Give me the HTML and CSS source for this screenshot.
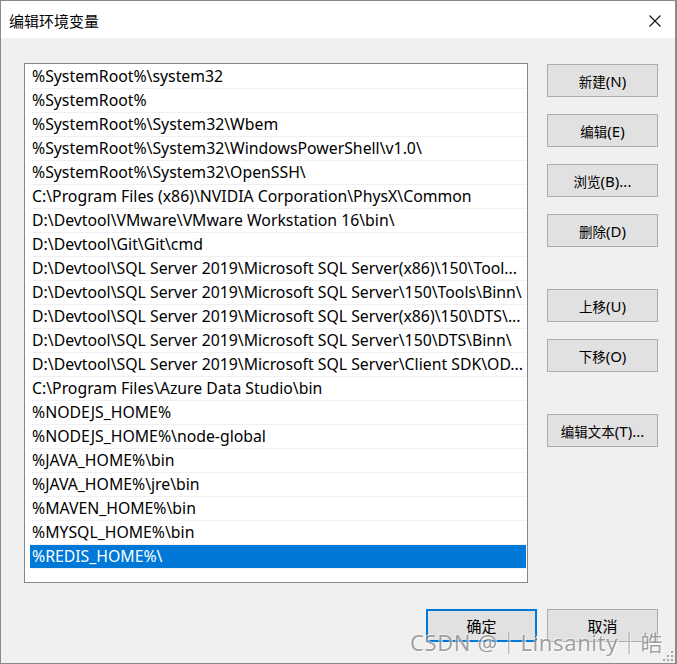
FILE: index.html
```html
<!DOCTYPE html>
<html lang="zh-CN">
<head>
<meta charset="utf-8">
<title>编辑环境变量</title>
<link rel="stylesheet" href="styles.css">
</head>
<body>
<div class="window">
  <div class="titlebar">
    <span class="title">编辑环境变量</span>
    <svg class="close" width="12" height="12" viewBox="0 0 12 12"><path d="M0.5 0.5 L11.5 11.5 M11.5 0.5 L0.5 11.5" stroke="#111" stroke-width="1.1" fill="none"/></svg>
  </div>
  <div class="body">
    <div class="main">
      <div class="listbox">
        <div class="row">%SystemRoot%\system32</div>
        <div class="row">%SystemRoot%</div>
        <div class="row">%SystemRoot%\System32\Wbem</div>
        <div class="row">%SystemRoot%\System32\WindowsPowerShell\v1.0\</div>
        <div class="row">%SystemRoot%\System32\OpenSSH\</div>
        <div class="row">C:\Program Files (x86)\NVIDIA Corporation\PhysX\Common</div>
        <div class="row">D:\Devtool\VMware\VMware Workstation 16\bin\</div>
        <div class="row">D:\Devtool\Git\Git\cmd</div>
        <div class="row">D:\Devtool\SQL Server 2019\Microsoft SQL Server(x86)\150\Tool...</div>
        <div class="row">D:\Devtool\SQL Server 2019\Microsoft SQL Server\150\Tools\Binn\</div>
        <div class="row">D:\Devtool\SQL Server 2019\Microsoft SQL Server(x86)\150\DTS\...</div>
        <div class="row">D:\Devtool\SQL Server 2019\Microsoft SQL Server\150\DTS\Binn\</div>
        <div class="row">D:\Devtool\SQL Server 2019\Microsoft SQL Server\Client SDK\OD...</div>
        <div class="row">C:\Program Files\Azure Data Studio\bin</div>
        <div class="row">%NODEJS_HOME%</div>
        <div class="row">%NODEJS_HOME%\node-global</div>
        <div class="row">%JAVA_HOME%\bin</div>
        <div class="row">%JAVA_HOME%\jre\bin</div>
        <div class="row">%MAVEN_HOME%\bin</div>
        <div class="row">%MYSQL_HOME%\bin</div>
        <div class="row selected">%REDIS_HOME%\</div>
      </div>
      <div class="side">
        <button class="btn"><span class="cjk">新建</span>(N)</button>
        <button class="btn"><span class="cjk">编辑</span>(E)</button>
        <button class="btn"><span class="cjk">浏览</span>(B)...</button>
        <button class="btn"><span class="cjk">删除</span>(D)</button>
        <button class="btn group"><span class="cjk">上移</span>(U)</button>
        <button class="btn"><span class="cjk">下移</span>(O)</button>
        <button class="btn group"><span class="cjk">编辑文本</span>(T)...</button>
      </div>
    </div>
    <div class="footer">
      <button class="btn default"><span class="cjk">确定</span></button>
      <button class="btn"><span class="cjk">取消</span></button>
    </div>
  </div>
  <div class="watermark">CSDN @｜Linsanity｜皓</div>
  <svg class="grip" width="12" height="12" viewBox="0 0 12 12">
    <rect x="9" y="1" width="2" height="2" fill="#a8a8a8"/>
    <rect x="5" y="5" width="2" height="2" fill="#a8a8a8"/>
    <rect x="9" y="5" width="2" height="2" fill="#a8a8a8"/>
    <rect x="1" y="9" width="2" height="2" fill="#a8a8a8"/>
    <rect x="5" y="9" width="2" height="2" fill="#a8a8a8"/>
    <rect x="9" y="9" width="2" height="2" fill="#a8a8a8"/>
  </svg>
</div>
</body>
</html>
```
FILE: styles.css
```css
* { box-sizing: border-box; }
html, body { margin: 0; padding: 0; }
body {
  font-family: "Noto Sans", "Noto Sans CJK SC", sans-serif;
  background: #f0f0f0;
}
.window {
  position: relative;
  width: 677px;
  height: 664px;
  border: 1px solid #8a8a8a;
  border-right-width: 2px;
  background: #f0f0f0;
  display: flex;
  flex-direction: column;
  overflow: hidden;
}
.titlebar {
  height: 37px;
  background: #fff;
  display: flex;
  align-items: center;
  justify-content: space-between;
  padding: 0 14px 0 8px;
  flex: none;
}
.title {
  font-family: "Noto Sans CJK SC", sans-serif;
  font-size: 15px;
  color: #000;
  position: relative;
  top: 1px;
}
.close { display: block; position: relative; top: 1px; }
.body {
  flex: 1;
  padding: 25px 17px 0 23px;
}
.main {
  display: flex;
  gap: 19px;
}
.listbox {
  width: 504px;
  height: 520px;
  background: #fff;
  border: 1px solid #828790;
  padding: 1px 1px 0 5px;
  flex: none;
}
.row {
  height: 24px;
  line-height: 23px;
  border-bottom: 1px solid #f0f0f0;
  padding-left: 2px;
  font-size: 15.8px;
  color: #000;
  white-space: nowrap;
  overflow: hidden;
  text-overflow: clip;
}
.row.selected {
  background: #0078d7;
  color: #fff;
}
.side {
  display: flex;
  flex-direction: column;
  gap: 17px;
  padding-top: 1px;
}
.btn {
  width: 111px;
  height: 33px;
  background: #e1e1e1;
  border: 1px solid #adadad;
  font-family: "Noto Sans", "Noto Sans CJK SC", sans-serif;
  font-size: 15px;
  color: #000;
  padding: 0;
  margin: 0;
  display: flex;
  align-items: center;
  justify-content: center;
}
.btn.group { margin-top: 25px; }
.cjk {
  font-family: "Noto Sans CJK SC", sans-serif;
  font-size: 13.5px;
}
.footer {
  display: flex;
  justify-content: flex-end;
  gap: 10px;
  margin-top: 26px;
}
.btn.default {
  border: 2px solid #0078d7;
}
.footer .cjk { font-size: 15px; }
.watermark {
  position: absolute;
  left: 409px;
  top: 624px;
  font-family: "Noto Sans", "Noto Sans CJK SC", sans-serif;
  font-size: 22px;
  color: rgba(100, 100, 100, 0.6);
  text-shadow: 1px 1px 0 rgba(255,255,255,0.8), -1px -1px 0 rgba(255,255,255,0.5);
  white-space: nowrap;
  letter-spacing: 0.6px;
}
.grip {
  position: absolute;
  right: 1px;
  bottom: 1px;
}
```
